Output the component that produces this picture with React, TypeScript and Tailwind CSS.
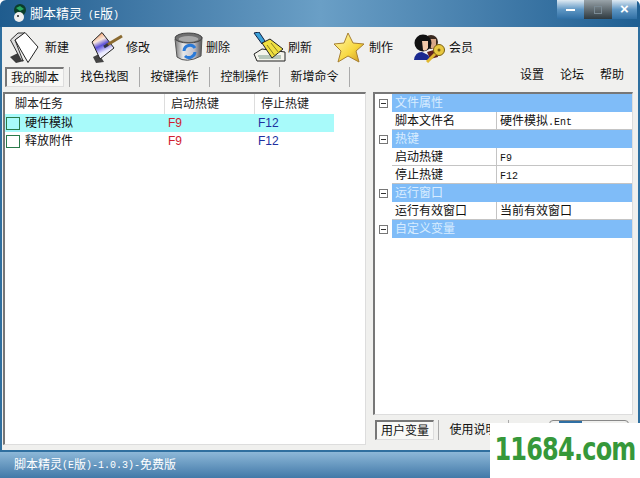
const cjk = "font-['Liberation_Sans','Noto_Sans_CJK_SC',sans-serif]";
const latin = "font-['Liberation_Mono',monospace] text-[10px]";

function NewIcon() {
  return (
    <svg width="29" height="31" viewBox="0 0 29 31">
      <path d="M0 25 L8 21 L14 29 L6 31 Z" fill="#3c3c3c" />
      <path d="M0.5 8 L8 1 L15 1 L5 8 L13 29 L11 28 Z" fill="#ddd" stroke="#333" />
      <path d="M5 8 L15 0.5 L28 15 L18 30.5 Z" fill="#fff" stroke="#222" />
    </svg>
  );
}

function EditIcon() {
  return (
    <svg width="32" height="31" viewBox="0 0 32 31">
      <defs>
        <linearGradient id="ed" x1="0.2" y1="0" x2="0.6" y2="1">
          <stop offset="0" stopColor="#f08a4a" />
          <stop offset="0.3" stopColor="#fae8dc" />
          <stop offset="0.5" stopColor="#5a50d8" />
          <stop offset="0.75" stopColor="#e8e8ff" />
          <stop offset="1" stopColor="#fff" />
        </linearGradient>
      </defs>
      <path d="M2 25 L8 22 L13 30 L5 31 Z" fill="#444" />
      <path d="M1 10 L11 0.5 L23 16 L9 27 Z" fill="url(#ed)" stroke="#222" />
      <path d="M16 13 L31 4" stroke="#8a6a30" strokeWidth="3" />
      <path d="M13 15 L17 12.5" stroke="#334" strokeWidth="3" />
    </svg>
  );
}

function DeleteIcon() {
  return (
    <svg width="29" height="31" viewBox="0 0 29 31">
      <defs>
        <linearGradient id="can" x1="0" y1="0" x2="1" y2="0">
          <stop offset="0" stopColor="#777" />
          <stop offset="0.3" stopColor="#e8e8e8" />
          <stop offset="0.7" stopColor="#c0c0cc" />
          <stop offset="1" stopColor="#555" />
        </linearGradient>
      </defs>
      <path d="M1 7 L3 25 Q12 32 27 24 L28 5 Z" fill="url(#can)" stroke="#555" />
      <ellipse cx="14.5" cy="6" rx="13.5" ry="5" fill="#6f6f6f" stroke="#444" />
      <ellipse cx="14.5" cy="7" rx="10" ry="3" fill="#a8a8a8" />
      <path d="M10 19 A6 6 0 0 1 21 16" stroke="#2a7ad8" strokeWidth="3" fill="none" />
      <path d="M21 20 A6 6 0 0 1 11 24" stroke="#2a7ad8" strokeWidth="3" fill="none" />
    </svg>
  );
}

function BrushIcon() {
  return (
    <svg width="33" height="31" viewBox="0 0 33 31">
      <path d="M1 22 L9 17 L32 20 L32 29 L4 29 Z" fill="#f4f4ec" stroke="#222" />
      <path d="M5 24 H28 M6 26 H28" stroke="#7a9a8a" />
      <path d="M1 1 L6 0 L12 9 L9 12 Z" fill="#3aa0d8" stroke="#124" />
      <path d="M9 11 L17 7 L30 17 L19 26 Z" fill="#f0e040" stroke="#222" />
      <path d="M14 13 L22 24 M18 11 L26 21" stroke="#8a8020" />
    </svg>
  );
}

function StarIcon() {
  return (
    <svg width="32" height="31" viewBox="0 0 32 31">
      <defs>
        <linearGradient id="st" x1="0" y1="0" x2="1" y2="1">
          <stop offset="0" stopColor="#fff8b0" />
          <stop offset="0.6" stopColor="#f8d840" />
          <stop offset="1" stopColor="#c89020" />
        </linearGradient>
      </defs>
      <path d="M15 1 L20 11 L31 12 L23 19 L26 30 L15 24 L5 30 L8 19 L1 12 L11 11 Z" fill="url(#st)" stroke="#a88030" />
    </svg>
  );
}

function MemberIcon() {
  return (
    <svg width="33" height="30" viewBox="0 0 33 30">
      <path d="M14 19 L24 16 L25 24 L17 26 Z" fill="#602020" />
      <path d="M1 27 Q2 19 9 19 L15 22 L18 27 Z" fill="#1a2a90" />
      <circle cx="18" cy="9" r="7" fill="#3a2a20" />
      <path d="M17 6 H23 V13 Q21 17 18 15 Z" fill="#d8a888" />
      <circle cx="10" cy="10" r="8.5" fill="#111" />
      <path d="M9 8 H15 V15 Q13 19 10 17 Z" fill="#f0c8a8" />
      <circle cx="26" cy="17" r="5.5" fill="#e8c840" stroke="#7a6010" />
      <circle cx="26" cy="17" r="1.5" fill="#7a6010" />
      <path d="M22 21 L14 29" stroke="#e0b830" strokeWidth="3" />
    </svg>
  );
}

function AppIcon() {
  return (
    <svg width="17" height="19" viewBox="0 0 17 19">
      <circle cx="9" cy="6" r="6" fill="#0b3d2a" />
      <path d="M5 4 L9 2 L13 5 L9 7 Z" fill="#27a860" />
      <circle cx="8" cy="13" r="5" fill="#eee" />
      <circle cx="7" cy="12" r="1" fill="#222" />
    </svg>
  );
}

function ToolButton({ icon, label, width, gap }: { icon: React.ReactNode; label: string; width: string; gap: string }) {
  return (
    <div className={`flex items-center ${gap} ${width}`}>
      {icon}
      <span className="text-[12px] text-[#111]">{label}</span>
    </div>
  );
}

function ActiveTab({ label }: { label: string }) {
  return (
    <div className="h-[20px] w-[59px] mr-[5px] flex items-center justify-center text-[12px] text-[#111] bg-[#f8f8f6] border-l-2 border-t-2 border-[#777] border-r border-b border-r-[#ddd] border-b-[#ddd]">
      {label}
    </div>
  );
}

function Tab({ label }: { label: string }) {
  return <div className="h-[20px] w-[69px] flex items-center justify-center text-[12px] text-[#111]">{label}</div>;
}

function Sep() {
  return <div className="w-px h-[20px] bg-[#aaa]" />;
}

function TaskRow({ name, selected }: { name: string; selected?: boolean }) {
  return (
    <div className={`flex h-[18px] items-center w-[329px] text-[12px] ${selected ? "bg-[#a8fafa]" : ""}`}>
      <div className="w-[160px] flex items-center">
        <div className="w-[14px] h-[13px] ml-px mr-[5px] border border-[#2a7a4a]" />
        <span className="text-[#111]">{name}</span>
      </div>
      <div className="w-[90px] pl-[3px] text-[#d02030]">F9</div>
      <div className="pl-[3px] text-[#2030a0]">F12</div>
    </div>
  );
}

function SectionRow({ label }: { label: string }) {
  return (
    <div className="flex h-[18px]">
      <div className="w-[17px] flex items-center justify-center">
        <div className="w-[9px] h-[9px] border border-[#777] flex items-center justify-center">
          <div className="w-[5px] h-px bg-[#333]" />
        </div>
      </div>
      <div className="flex-1 bg-[#7fbcf8] text-[#d8ecff] text-[12px] pl-[3px] flex items-center">{label}</div>
    </div>
  );
}

function PropRow({ name, children }: { name: string; children: React.ReactNode }) {
  return (
    <div className="flex h-[18px] ml-[17px] border-b border-[#c4c4c4] text-[12px] text-[#111] items-center">
      <div className="w-[105px] h-full pl-[3px] border-r border-[#c4c4c4] flex items-center">{name}</div>
      <div className="pl-[3px]">{children}</div>
    </div>
  );
}

export default function App() {
  return (
    <div className={`relative w-[640px] h-[478px] overflow-hidden flex flex-col ${cjk}`}>
      {/* TITLE BAR */}
      <div className="h-[27px] shrink-0 flex items-center pl-[11px] rounded-t-md bg-gradient-to-r from-[#1f5c8e] via-[#6a9fc6] to-[#1f5f92]">
        <AppIcon />
        <span className="ml-[2px] text-[13px] text-white">
          脚本精灵<span className={latin}> (E</span>版<span className={latin}>)</span>
        </span>
        <div className="ml-auto self-start flex h-[19px] mr-[3px]">
          <div className="w-[27px] bg-gradient-to-b from-[#dfeaf2] via-[#5f97c4] to-[#2f6fa4] flex items-center justify-center">
            <div className="w-[9px] h-[2px] bg-white" />
          </div>
          <div className="w-[28px] bg-gradient-to-b from-[#9aa4aa] to-[#2f3a40] flex items-center justify-center">
            <div className="w-[8px] h-[8px] border border-[#7a8a94]" />
          </div>
          <div className="w-[25px] bg-gradient-to-b from-[#dfeaf2] via-[#5f97c4] to-[#2f6fa4] flex items-center justify-center text-white text-[15px] font-bold">
            ×
          </div>
        </div>
      </div>

      <div className="flex-1 min-h-0 flex flex-col bg-[#f0f0ee] border-x-2 border-[#2f6f9f]">
        {/* TOOLBAR */}
        <div className="h-[38px] shrink-0 flex items-center pl-[8px] pt-[3px]">
          <ToolButton icon={<NewIcon />} label="新建" width="w-[81px]" gap="gap-[6px]" />
          <ToolButton icon={<EditIcon />} label="修改" width="w-[83px]" gap="gap-[3px]" />
          <ToolButton icon={<DeleteIcon />} label="删除" width="w-[79px]" gap="gap-[3px]" />
          <ToolButton icon={<BrushIcon />} label="刷新" width="w-[80px]" gap="gap-[2px]" />
          <ToolButton icon={<StarIcon />} label="制作" width="w-[80px]" gap="gap-[4px]" />
          <ToolButton icon={<MemberIcon />} label="会员" width="w-[80px]" gap="gap-[3px]" />
        </div>

        {/* TABS */}
        <div className="h-[27px] shrink-0 flex items-start pt-[2px] pl-[3px] pr-[14px]">
          <ActiveTab label="我的脚本" />
          <Sep />
          <Tab label="找色找图" />
          <Sep />
          <Tab label="按键操作" />
          <Sep />
          <Tab label="控制操作" />
          <Sep />
          <Tab label="新增命令" />
          <Sep />
          <div className="ml-auto -mt-px flex gap-[16px] text-[12px] text-[#111]">
            <span>设置</span>
            <span>论坛</span>
            <span>帮助</span>
          </div>
        </div>

        {/* PANELS */}
        <div className="flex-1 flex pl-px pr-[5px] gap-[7px] min-h-0">
          <div className="w-[363px] h-[353px] bg-white border-l-2 border-t-2 border-[#777] border-r border-b border-r-[#ddd] border-b-[#ddd]">
            <div className="flex h-[20px] w-[329px] items-center text-[12px] text-[#222]">
              <div className="w-[160px] pl-[10px] h-full flex items-center border-r border-[#ddd]">脚本任务</div>
              <div className="w-[90px] pl-[6px] h-full flex items-center border-r border-[#ddd]">启动热键</div>
              <div className="flex-1 pl-[6px]">停止热键</div>
            </div>
            <TaskRow name="硬件模拟" selected />
            <TaskRow name="释放附件" />
          </div>

          <div className="w-[260px] flex flex-col">
            <div className="h-[323px] bg-white border-l-2 border-t-2 border-[#777] border-r border-b border-r-[#ddd] border-b-[#ddd]">
              <SectionRow label="文件属性" />
              <PropRow name="脚本文件名">
                硬件模拟<span className={latin}>.Ent</span>
              </PropRow>
              <SectionRow label="热键" />
              <PropRow name="启动热键">
                <span className={latin}>F9</span>
              </PropRow>
              <PropRow name="停止热键">
                <span className={latin}>F12</span>
              </PropRow>
              <SectionRow label="运行窗口" />
              <PropRow name="运行有效窗口">当前有效窗口</PropRow>
              <SectionRow label="自定义变量" />
            </div>
            <div className="flex items-start pt-[5px] pl-[2px]">
              <ActiveTab label="用户变量" />
              <div className="w-px h-[20px] bg-[#aaa] ml-[-1px]" />
              <Tab label="使用说明" />
              <Sep />
              <div className="ml-[40px] w-[80px] h-[12px] rounded-t-sm border border-[#888] pl-[9px]">
                <div className="w-[23px] h-[2px] bg-[#2f6fa4]" />
              </div>
            </div>
          </div>
        </div>
      </div>

      {/* STATUS BAR */}
      <div className="h-[28px] shrink-0 flex items-center pl-[14px] border-t-2 border-[#2f6f9f] bg-gradient-to-b from-[#8db8d8] to-[#4279a8] text-[12px] text-white">
        脚本精灵<span className={latin}>(E</span>版<span className={latin}>)-1.0.3)-</span>免费版
      </div>

      {/* WATERMARK */}
      <div className="absolute right-0 bottom-0 w-[150px] h-[55px] bg-white flex items-start justify-center">
        <span className="mt-[11px] font-['DejaVu_Sans',sans-serif] font-bold text-[24px] leading-[30px] tracking-[-0.8px] text-[#36983a] scale-y-[1.35]">
          11684.com
        </span>
      </div>
    </div>
  );
}
